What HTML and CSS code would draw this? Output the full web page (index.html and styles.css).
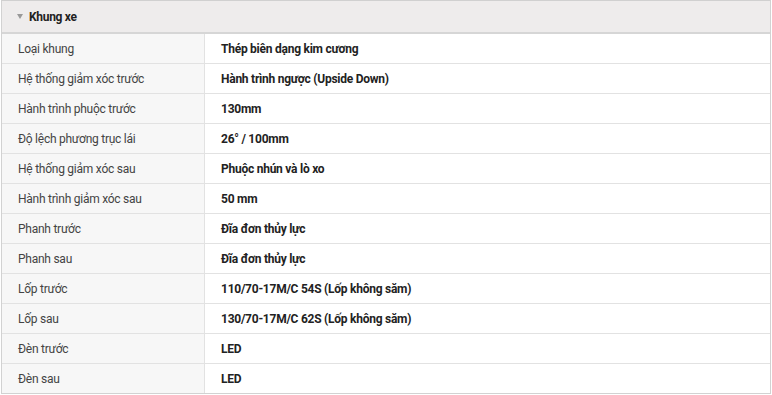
FILE: index.html
```html
<!DOCTYPE html>
<html lang="vi">
<head>
<meta charset="utf-8">
<link rel="stylesheet" href="styles.css">
</head>
<body>
<div class="spec">
  <div class="spec-head"><span class="caret"></span>Khung xe</div>
  <table class="spec-table">
    <tr><td class="k">Loại khung</td><td class="v">Thép biên dạng kim cương</td></tr>
    <tr><td class="k">Hệ thống giảm xóc trước</td><td class="v">Hành trình ngược (Upside Down)</td></tr>
    <tr><td class="k">Hành trình phuộc trước</td><td class="v">130mm</td></tr>
    <tr><td class="k">Độ lệch phương trục lái</td><td class="v">26° / 100mm</td></tr>
    <tr><td class="k">Hệ thống giảm xóc sau</td><td class="v">Phuộc nhún và lò xo</td></tr>
    <tr><td class="k">Hành trình giảm xóc sau</td><td class="v">50 mm</td></tr>
    <tr><td class="k">Phanh trước</td><td class="v">Đĩa đơn thủy lực</td></tr>
    <tr><td class="k">Phanh sau</td><td class="v">Đĩa đơn thủy lực</td></tr>
    <tr><td class="k">Lốp trước</td><td class="v">110/70-17M/C 54S (Lốp không săm)</td></tr>
    <tr><td class="k">Lốp sau</td><td class="v">130/70-17M/C 62S (Lốp không săm)</td></tr>
    <tr><td class="k">Đèn trước</td><td class="v">LED</td></tr>
    <tr><td class="k">Đèn sau</td><td class="v">LED</td></tr>
  </table>
</div>
</body>
</html>
```
FILE: styles.css
```css
html, body { margin: 0; padding: 0; background: #fff; }
body { font-family: Roboto, "Liberation Sans", sans-serif; font-size: 12px; color: #333; }
.spec { margin-left: 1px; width: 770px; border: 1px solid #d2d2d2; border-top-color: #d0d0d0; box-sizing: border-box; }
.spec-head { height: 31px; background: #eeecec; border-bottom: 2px solid #d6d6d6; display: flex; align-items: center; padding-left: 15px; font-weight: 700; color: #222; letter-spacing: -0.3px; }
.caret { width: 0; height: 0; border-left: 3.5px solid transparent; border-right: 3.5px solid transparent; border-top: 5px solid #999; margin-right: 6px; margin-top: -1px; }
.spec-table { width: 100%; border-collapse: collapse; }
.spec-table td { height: 29px; padding: 0; border-bottom: 1px solid #e2e2e2; vertical-align: middle; letter-spacing: -0.25px; }
.spec-table tr:last-child td { border-bottom: none; }
.k { width: 186px; padding-left: 16px !important; background: #f7f7f7; border-right: 1px solid #e2e2e2; color: #444; }
.v { padding-left: 16px !important; font-weight: 700; color: #222; letter-spacing: -0.3px; }
```
